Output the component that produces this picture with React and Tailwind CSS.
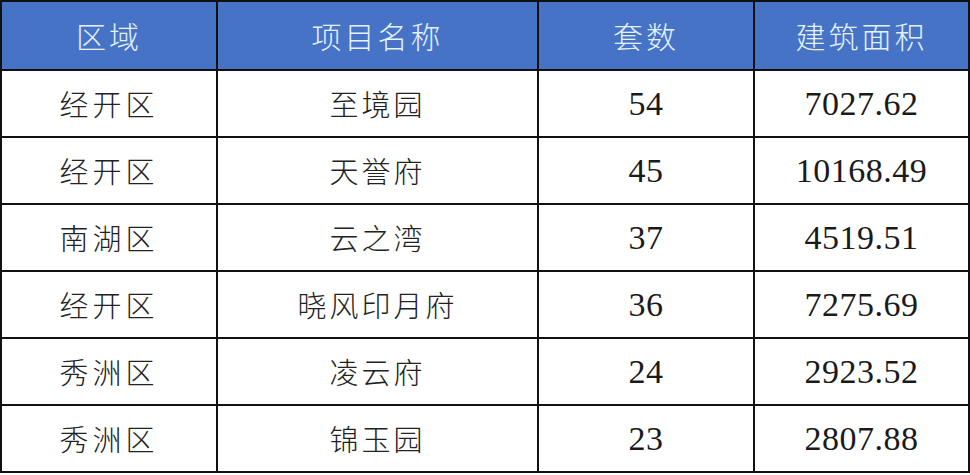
import React from "react";

const rows = [
  ["经开区", "至境园", "54", "7027.62"],
  ["经开区", "天誉府", "45", "10168.49"],
  ["南湖区", "云之湾", "37", "4519.51"],
  ["经开区", "晓风印月府", "36", "7275.69"],
  ["秀洲区", "凌云府", "24", "2923.52"],
  ["秀洲区", "锦玉园", "23", "2807.88"],
];

// Chinese cells and number cells use different faces
const cjk = "font-[Noto_Sans_CJK_SC]";
const num = "font-[Liberation_Serif]";

export default function App() {
  return (
    <div className="w-[970px] h-[475px] bg-white overflow-hidden">
      <table className="border-collapse table-fixed w-[968px]">
        <colgroup>
          <col className="w-[216px]" />
          <col className="w-[321px]" />
          <col className="w-[216px]" />
          <col className="w-[215px]" />
        </colgroup>
        <thead>
          <tr className="h-[69px] bg-[#4673c6]">
            {["区域", "项目名称", "套数", "建筑面积"].map((h) => (
              <th
                key={h}
                className={`border-2 border-[#111] text-center text-[30px] font-light tracking-[3px] text-[#e4f2ff] ${cjk}`}
              >
                {h}
              </th>
            ))}
          </tr>
        </thead>
        <tbody>
          {rows.map((r, i) => (
            <tr key={i} className="h-[67px]">
              <td className={`border-2 border-[#111] text-center text-[29px] font-light tracking-[4px] text-[#222] ${cjk}`}>
                {r[0]}
              </td>
              <td className={`border-2 border-[#111] text-center text-[29px] font-light tracking-[3px] text-[#222] ${cjk}`}>
                {r[1]}
              </td>
              <td className={`border-2 border-[#111] text-center text-[34px] tracking-[0.5px] text-[#1a1a1a] ${num}`}>
                {r[2]}
              </td>
              <td className={`border-2 border-[#111] text-center text-[34px] tracking-[0.5px] text-[#1a1a1a] ${num}`}>
                {r[3]}
              </td>
            </tr>
          ))}
        </tbody>
      </table>
    </div>
  );
}
